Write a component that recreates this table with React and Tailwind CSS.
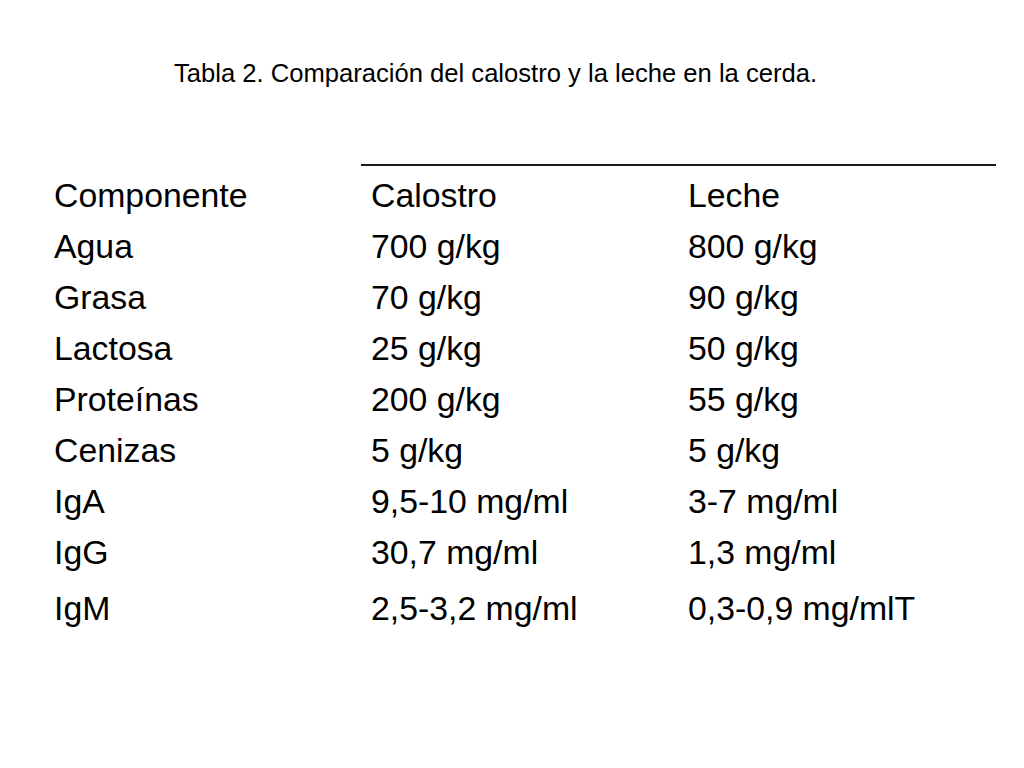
import React from 'react';

const ROWS = [
  ['Componente', 'Calostro', 'Leche'],
  ['Agua', '700 g/kg', '800 g/kg'],
  ['Grasa', '70 g/kg', '90 g/kg'],
  ['Lactosa', '25 g/kg', '50 g/kg'],
  ['Proteínas', '200 g/kg', '55 g/kg'],
  ['Cenizas', '5 g/kg', '5 g/kg'],
  ['IgA', '9,5-10 mg/ml', '3-7 mg/ml'],
  ['IgG', '30,7 mg/ml', '1,3 mg/ml'],
  ['IgM', '2,5-3,2 mg/ml', '0,3-0,9 mg/mlT'],
];

export default function App() {
  return (
    <div
      className="w-[1024px] h-[768px] bg-white text-black overflow-hidden"
      style={{ fontFamily: '"Liberation Sans", Arial, sans-serif' }}
    >
      <div className="pt-[58px] pl-[174px] text-[25.6px] leading-[30px] whitespace-nowrap">
        Tabla 2. Comparación del calostro y la leche en la cerda.
      </div>

      <div className="mt-[76px] pl-[54px]">
        <div className="ml-[307px] w-[635px] h-[1.5px] bg-[#1a1a1a]" />
        <div className="mt-[4px]">
          {ROWS.map((row, i) => (
            <div
              key={row[0]}
              className={`grid grid-cols-[317px_317px_1fr] text-[33.8px] leading-[51px] whitespace-nowrap ${
                i === ROWS.length - 1 ? 'mt-[5px]' : ''
              }`}
            >
              {row.map((cell) => (
                <div key={cell}>{cell}</div>
              ))}
            </div>
          ))}
        </div>
      </div>
    </div>
  );
}
